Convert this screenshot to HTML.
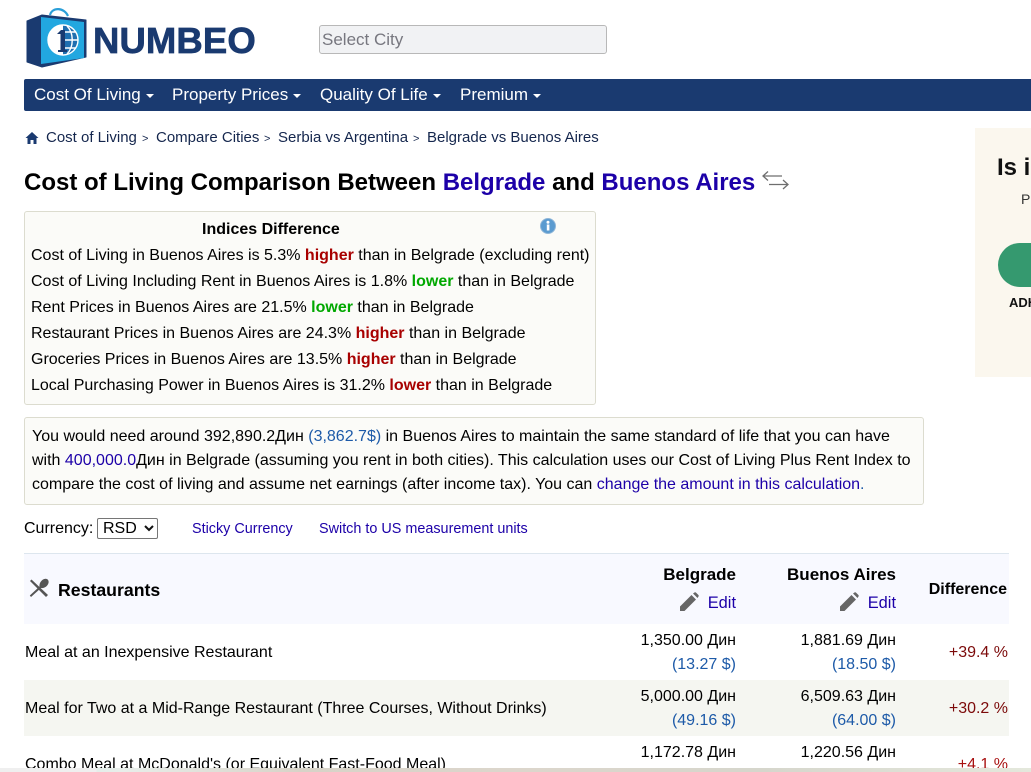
<!DOCTYPE html>
<html>
<head>
<meta charset="utf-8">
<style>
html,body{margin:0;padding:0;background:#fff;overflow:hidden}
body{width:1031px;height:772px;position:relative;font-family:"Liberation Sans",Arial,sans-serif;font-size:16px;color:#000}
.t{position:absolute;white-space:nowrap;line-height:20px;height:20px}
.r{text-align:right}
.a{color:#1c00a8}
.u{color:#1d5aa8}
.b{font-weight:bold}
.hi{font-weight:bold;color:#a80000}
.lo{font-weight:bold;color:#00a800}
.nav{color:#fff;top:85px;font-size:17px}
.caret{display:inline-block;width:0;height:0;border-left:4px solid transparent;border-right:4px solid transparent;border-top:4px solid #fff;vertical-align:middle;margin-left:5px;margin-top:1px}
.box{position:absolute;background:#fbfbf8;border:1px solid #dcdccf;border-radius:3px;box-sizing:border-box}
.bc{font-size:15px;color:#14264d;top:128px}
.sep{font-size:11px;color:#14264d;top:129px}
.d{color:#7c0a0a}
.h{font-size:17px}
</style>
</head>
<body>
<!-- logo -->
<svg style="position:absolute;left:24px;top:5px" width="66" height="64" viewBox="0 0 66 64">
<path d="M26 10 C28 2 40 2 44 11" fill="none" stroke="#2a9fd8" stroke-width="2.2"/>
<path d="M3 16 L18 10 L62 15 L62 52 L18 62 L3 57 Z" fill="#1a3a70" stroke="#1a3a70" stroke-width="1" stroke-linejoin="round"/>
<path d="M17 12 L60 17 L60 53 L17 59 Z" fill="#22a7e0"/>
<path d="M39 20 A15 15 0 0 0 39 50 Z" fill="#fff"/>
<path d="M39 20 A15 15 0 0 1 39 50 Z" fill="#1f6fb0"/>
<circle cx="39" cy="35" r="15" fill="none" stroke="#fff" stroke-width="1.4"/>
<path d="M43 21 C50 28 50 42 43 49 M39 27 L52 27 M39 35 L54 35 M39 43 L52 43" fill="none" stroke="#fff" stroke-width="1.4"/>
<path d="M33 29 L37 25 L41 25 L41 45 L43 45 L43 47 L34 47 L34 45 L36.5 45 L36.5 29 Z" fill="#1a3a70"/>
</svg>
<div class="t b" style="left:93px;top:21px;height:40px;line-height:40px;font-size:36.5px;color:#1a3a70;letter-spacing:0.1px;-webkit-text-stroke:0.7px #1a3a70">NUMBEO</div>
<!-- select city -->
<div style="position:absolute;left:319px;top:25px;width:288px;height:29px;box-sizing:border-box;background:#f1f2f4;border:1px solid #b8b8b8;border-radius:3px"></div>
<div class="t" style="left:322px;top:30px;color:#77777f;font-size:17px">Select City</div>
<!-- nav -->
<div style="position:absolute;left:24px;top:79px;width:1007px;height:32px;background:#1a3a70;border-radius:2px 0 0 2px"></div>
<div class="t nav" style="left:34px">Cost Of Living<span class="caret"></span></div>
<div class="t nav" style="left:172px">Property Prices<span class="caret"></span></div>
<div class="t nav" style="left:320px">Quality Of Life<span class="caret"></span></div>
<div class="t nav" style="left:460px">Premium<span class="caret"></span></div>
<!-- breadcrumb -->
<svg style="position:absolute;left:25px;top:131px" width="14" height="14" viewBox="0 0 14 14"><path d="M7 1 L0.5 7 L2.5 7 L2.5 13 L5.5 13 L5.5 9 L8.5 9 L8.5 13 L11.5 13 L11.5 7 L13.5 7 Z" fill="#1a3a70"/></svg>
<div class="t bc" style="left:46px">Cost of Living</div>
<div class="t sep" style="left:142px">&gt;</div>
<div class="t bc" style="left:156px">Compare Cities</div>
<div class="t sep" style="left:264px">&gt;</div>
<div class="t bc" style="left:278px">Serbia vs Argentina</div>
<div class="t sep" style="left:413px">&gt;</div>
<div class="t bc" style="left:427px">Belgrade vs Buenos Aires</div>
<!-- title -->
<div class="t b" style="left:24px;top:168px;height:30px;line-height:30px;font-size:24px">Cost of Living Comparison Between <span class="a">Belgrade</span> and <span class="a">Buenos Aires</span></div>
<svg style="position:absolute;left:762px;top:170px" width="28" height="22" viewBox="0 0 28 22" fill="none" stroke="#6e6e6e" stroke-width="1.3">
<path d="M1 6 L20 6" /><path d="M6 1.5 L1 6 L6 10.5"/><path d="M7 14.5 L26 14.5"/><path d="M21 10 L26 14.5 L21 19"/>
</svg>
<!-- ad -->
<div style="position:absolute;left:975px;top:128px;width:56px;height:249px;background:#fbf7ee"></div>
<div class="t b" style="left:997px;top:154px;height:28px;line-height:28px;font-size:24px;color:#111;width:34px;overflow:hidden">Is i</div>
<div class="t" style="left:1021px;top:189px;font-size:14px;color:#333;width:10px;overflow:hidden">Pr</div>
<div style="position:absolute;left:998px;top:243px;width:33px;height:44px;background:#35996f;border-radius:22px 0 0 22px"></div>
<div class="t b" style="left:1009px;top:293px;font-size:13px;color:#111;width:22px;overflow:hidden">ADH</div>
<!-- indices box -->
<div class="box" style="left:24px;top:211px;width:572px;height:194px"></div>
<div class="t b" style="left:202px;top:220px">Indices Difference</div>
<svg style="position:absolute;left:540px;top:218px" width="16" height="16" viewBox="0 0 16 16"><circle cx="8" cy="8" r="7.5" fill="#5b9bd0" stroke="#8fb6d8"/><rect x="6.8" y="6.5" width="2.6" height="6" fill="#fff"/><circle cx="8" cy="4.3" r="1.5" fill="#fff"/></svg>
<div class="t" style="left:31px;top:246px">Cost of Living in Buenos Aires is 5.3% <span class="hi">higher</span> than in Belgrade (excluding rent)</div>
<div class="t" style="left:31px;top:272px">Cost of Living Including Rent in Buenos Aires is 1.8% <span class="lo">lower</span> than in Belgrade</div>
<div class="t" style="left:31px;top:298px">Rent Prices in Buenos Aires are 21.5% <span class="lo">lower</span> than in Belgrade</div>
<div class="t" style="left:31px;top:324px">Restaurant Prices in Buenos Aires are 24.3% <span class="hi">higher</span> than in Belgrade</div>
<div class="t" style="left:31px;top:350px">Groceries Prices in Buenos Aires are 13.5% <span class="hi">higher</span> than in Belgrade</div>
<div class="t" style="left:31px;top:376px">Local Purchasing Power in Buenos Aires is 31.2% <span class="hi">lower</span> than in Belgrade</div>
<!-- text box -->
<div class="box" style="left:24px;top:417px;width:900px;height:88px"></div>
<div class="t" style="left:32px;top:427px">You would need around 392,890.2Дин <span class="u">(3,862.7$)</span> in Buenos Aires to maintain the same standard of life that you can have</div>
<div class="t" style="left:32px;top:451px">with <span class="a">400,000.0</span>Дин in Belgrade (assuming you rent in both cities). This calculation uses our Cost of Living Plus Rent Index to</div>
<div class="t" style="left:32px;top:475px">compare the cost of living and assume net earnings (after income tax). You can <span class="a">change the amount in this calculation</span><span class="u">.</span></div>
<!-- currency -->
<div class="t" style="left:24px;top:519px">Currency:</div>
<div style="position:absolute;left:97px;top:518px;width:61px;height:21px;box-sizing:border-box;border:1px solid #767676;border-radius:2px;background:#fff"></div>
<div class="t" style="left:103px;top:519px">RSD</div>
<svg style="position:absolute;left:144px;top:525px" width="10" height="7" viewBox="0 0 10 7"><path d="M1 1 L5 5 L9 1" fill="none" stroke="#111" stroke-width="2"/></svg>
<div class="t a" style="left:192px;top:519px;font-size:14.4px">Sticky Currency</div>
<div class="t a" style="left:319px;top:519px;font-size:14.4px">Switch to US measurement units</div>
<!-- table head -->
<div style="position:absolute;left:24px;top:553px;width:985px;height:71px;background:#f8f9ff;border-top:1px solid #dde6ee;box-sizing:border-box"></div>
<svg style="position:absolute;left:29px;top:578px" width="20" height="20" viewBox="0 0 20 20" fill="#555">
<path d="M1 3 L2.5 1.5 L19 17 L17 19 Z"/>
<path d="M2 19 L0.8 17.5 L10.5 8.5 C10 5 13 1 16.5 0.8 C19 0.8 20 3 19.5 5 C18.5 8.5 15 10.5 12 10 Z"/>
</svg>
<div class="t b" style="left:58px;top:580px;font-size:17.7px">Restaurants</div>
<div class="t b r h" style="right:295px;top:565px">Belgrade</div>
<div class="t b r h" style="right:135px;top:565px">Buenos Aires</div>
<div class="t b r" style="right:24px;top:580px">Difference</div>
<svg style="position:absolute;left:679px;top:592px" width="20" height="20" viewBox="0 0 20 20"><path d="M1 19 L1 14.5 L12.5 3 L17 7.5 L5.5 19 Z M14 1.5 L15.5 0.5 C16 0.2 16.5 0.2 17 0.6 L19.4 3 C19.8 3.5 19.8 4 19.5 4.5 L18.5 6 Z" fill="#666"/></svg>
<div class="t a r" style="right:295px;top:593px;font-size:16.4px">Edit</div>
<svg style="position:absolute;left:839px;top:592px" width="20" height="20" viewBox="0 0 20 20"><path d="M1 19 L1 14.5 L12.5 3 L17 7.5 L5.5 19 Z M14 1.5 L15.5 0.5 C16 0.2 16.5 0.2 17 0.6 L19.4 3 C19.8 3.5 19.8 4 19.5 4.5 L18.5 6 Z" fill="#666"/></svg>
<div class="t a r" style="right:135px;top:593px;font-size:16.4px">Edit</div>
<!-- row 1 -->
<div class="t" style="left:25px;top:643px">Meal at an Inexpensive Restaurant</div>
<div class="t r" style="right:295px;top:631px">1,350.00 Дин</div>
<div class="t u r" style="right:295px;top:655px">(13.27 $)</div>
<div class="t r" style="right:135px;top:631px">1,881.69 Дин</div>
<div class="t u r" style="right:135px;top:655px">(18.50 $)</div>
<div class="t d r" style="right:23px;top:643px">+39.4 %</div>
<!-- row 2 -->
<div style="position:absolute;left:24px;top:680px;width:985px;height:56px;background:#f5f6f1"></div>
<div class="t" style="left:25px;top:699px">Meal for Two at a Mid-Range Restaurant (Three Courses, Without Drinks)</div>
<div class="t r" style="right:295px;top:687px">5,000.00 Дин</div>
<div class="t u r" style="right:295px;top:711px">(49.16 $)</div>
<div class="t r" style="right:135px;top:687px">6,509.63 Дин</div>
<div class="t u r" style="right:135px;top:711px">(64.00 $)</div>
<div class="t d r" style="right:23px;top:699px">+30.2 %</div>
<!-- row 3 -->
<div class="t" style="left:25px;top:755px">Combo Meal at McDonald's (or Equivalent Fast-Food Meal)</div>
<div class="t r" style="right:295px;top:743px">1,172.78 Дин</div>
<div class="t r" style="right:135px;top:743px">1,220.56 Дин</div>
<div class="t d r" style="right:23px;top:755px;color:#a81010">+4.1 %</div>
<!-- bottom strip -->
<div style="position:absolute;left:0;top:768px;width:1031px;height:4px;background:linear-gradient(90deg,#efefef 0,#efefef 96px,#e4eeea 97px,#e8eeea 122px,#d8d3c8 300px,#dcd6cc 520px,#d6d6cc 760px,#e4e8dc 1031px)"></div>
</body>
</html>
